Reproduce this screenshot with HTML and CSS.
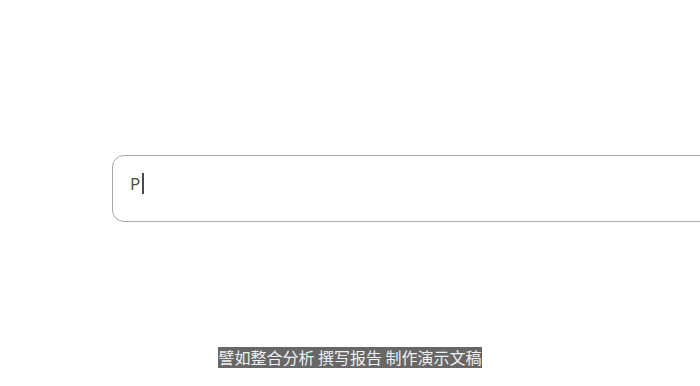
FILE: index.html
```html
<!DOCTYPE html>
<html lang="zh">
<head>
<meta charset="utf-8">
<link rel="stylesheet" href="styles.css">
</head>
<body>
<div class="page">
  <div class="input-row">
    <div class="input-box">
      <span class="typed">P</span><span class="caret"></span>
    </div>
  </div>
  <div class="caption-row">
    <span class="caption">譬如整合分析 撰写报告 制作演示文稿</span>
  </div>
</div>
</body>
</html>
```
FILE: styles.css
```css
html, body {
  margin: 0;
  padding: 0;
  background: #ffffff;
}
.page {
  width: 700px;
  height: 386px;
  overflow: hidden;
  display: flex;
  flex-direction: column;
}
.input-row {
  padding-top: 155px;
  padding-left: 112px;
}
.input-box {
  width: 640px;
  height: 67px;
  box-sizing: border-box;
  border: 1.5px solid #a8a8a8;
  border-radius: 12px;
  display: flex;
  align-items: center;
  padding-left: 17px;
  padding-bottom: 10px;
  font-family: "Open Sans", "Noto Sans", sans-serif;
  font-size: 17px;
  color: #4a4a4a;
}
.typed {
  line-height: 20px;
}
.caret {
  display: inline-block;
  width: 1.5px;
  height: 21px;
  background: #4a4a4a;
  margin-left: 2px;
}
.caption-row {
  display: flex;
  justify-content: center;
  padding-top: 125px;
}
.caption {
  background: #676767;
  color: #f0f0f0;
  font-family: "Noto Sans CJK SC", "Noto Sans", sans-serif;
  font-size: 16px;
  line-height: 21px;
  padding: 0;
}
```
